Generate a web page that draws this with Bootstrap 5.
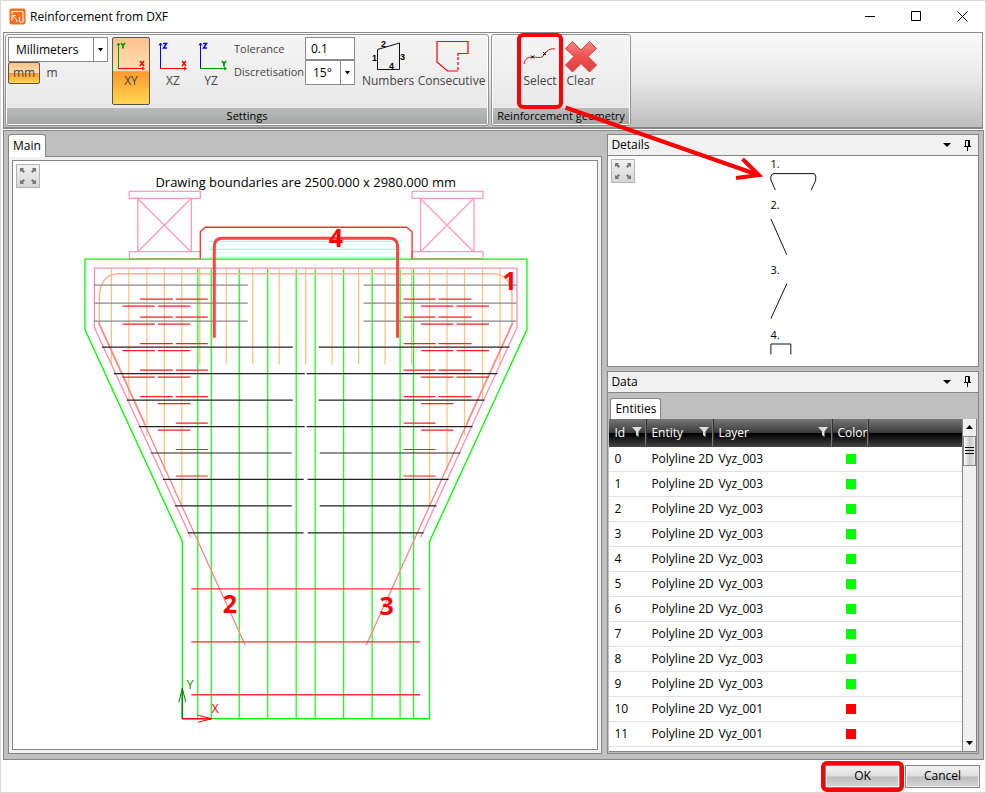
<!DOCTYPE html>
<html lang="en">
<head>
<meta charset="utf-8">
<meta name="viewport" content="width=device-width, initial-scale=1">
<title>Reinforcement from DXF</title>
<link rel="stylesheet" href="https://cdn.jsdelivr.net/npm/bootstrap@5.3.0/dist/css/bootstrap.min.css">
<style>
  body { font-family: "Open Sans", "Noto Sans", sans-serif; font-size: 12px; line-height: 16px; color: #000; background: #fff; }
  .app-window { border: 1px solid #d9d9d9; }
  button, input, select { font: inherit; color: inherit; }
  button { background: none; border: 0; padding: 0; }
  svg { display: block; flex: none; }
  h1, h2 { font-size: 12px; line-height: 16px; font-weight: 400; margin: 0; }
  .title-strip { height: 31px; }
  .win-btn { width: 46px; height: 29px; display: grid; place-items: center; }

  .ribbon { margin: 0 2px; padding: 1px; border: 1px solid #888; border-bottom: 2px solid #888; gap: 2px; background: linear-gradient(#fafafa, #e9e8e9 50%, #bdbdbd); }
  .ribbon-group { border: 1px solid #929292; border-radius: 3px; background: linear-gradient(#f6f6f6, #e6e4e6); box-shadow: inset 0 0 0 1px #fff; padding: 1px; color: #444; }
  .geometry-group { width: 140px; }
  .ribbon-body { height: 72px; padding: 1px; }
  .geometry-group .ribbon-body { padding-left: 28px; gap: 3px; }
  .group-name { height: 16px; background: linear-gradient(#b9bcba, #a4a6a5); color: #000; font-size: 11px; text-align: center; white-space: nowrap; }
  .combo { border: 1px solid #8a8a8a; background: #fff; height: 25px; color: #000; }
  .combo select, .num-box { appearance: none; border: 0; background: #fff; outline: 0; min-width: 0; border-radius: 0; padding: 0 0 0 7px; }
  .combo .drop { width: 14px; border-left: 1px solid #8a8a8a; display: grid; place-items: center; }
  .unit-col { width: 100px; }
  .num-col { width: 50px; }
  .num-box { border: 1px solid #8a8a8a; height: 23px; width: 100%; padding-left: 5px; color: #000; }
  .unit-btn { width: 32px; height: 22px; border: 1px solid transparent; border-radius: 2px; }
  .unit-plain { width: 24px; }
  .tool { border: 1px solid transparent; border-radius: 2px; height: 68px; display: flex; flex-direction: column; align-items: center; padding-top: 2px; }
  .tool svg { height: 33px; }
  .tool-axis { width: 38px; }
  .tool-mid { width: 50px; }
  .tool-wide { width: 69px; }
  .is-on { border-color: #5c5446; background: linear-gradient(#fdc38c, #fedfb3 50%, #ff9a2c 51%, #ffd752); }
  .label-col { width: 71px; font-size: 11px; line-height: 23px; white-space: nowrap; }
  .marked::after { content: ""; position: absolute; inset: -5px; border: 4px solid #f00; border-radius: 6px; pointer-events: none; }
  .callout-arrow { position: absolute; left: 40px; top: 65px; pointer-events: none; z-index: 5; }
  .tool .callout-arrow { height: 86px; }

  .workspace { background: #bfbfbf; border: 1px solid #888; margin: 1px 1px 0 2px; padding: 3px 4px 5px 4px; display: grid; grid-template-columns: minmax(0, 595fr) minmax(0, 372fr); column-gap: 5px; min-height: 0; }
  .tab-btn { background: #fff; border: 1px solid #858585; border-bottom: 0; border-radius: 3px 3px 0 0; }
  .tab-main { height: 23px; padding: 0 4px; margin-bottom: -1px; z-index: 1; }
  .page-frame { border: 1px solid #858585; background: #f1f1f1; padding: 3px; min-height: 0; }
  .canvas-frame { border: 1px solid #858585; background: #fff; min-height: 0; }
  .canvas-frame > svg, .detail-body > svg { width: 100%; height: 100%; }
  .fit-btn { position: absolute; left: 3px; top: 3px; width: 24px; height: 24px; border: 1px solid #b4b4b4; background: linear-gradient(#f2f2f2, #d5d5d5); display: grid; place-items: center; }
  .side { display: grid; grid-template-rows: minmax(0, 233fr) minmax(0, 384fr); row-gap: 4px; min-height: 0; }
  .dock { border: 1px solid #858585; min-height: 0; overflow: hidden; }
  .dock-head { background: #f1f1f1; border-bottom: 1px solid #858585; height: 21px; padding: 0 6px 0 3px; }
  .detail-body { background: #fff; min-height: 0; }
  .tab-entities { height: 21px; padding: 0 4px; margin: 5px 0 0 2px; }
  .grid-area { background: #fff; min-height: 0; border-bottom: 1px solid #858585; margin: 0 1px 1px 1px; }
  .rows { min-height: 0; min-width: 0; overflow: hidden; }
  .entity-grid { width: 100%; table-layout: fixed; border-collapse: separate; border-spacing: 0; }
  .entity-grid th { height: 28px; font-weight: 400; color: #fff; padding: 0 2px 0 5px; background: linear-gradient(#777, #3c3c3c 48%, #000 52%, #454545); border-right: 1px solid #777; white-space: nowrap; }
  .entity-grid th + th { border-left: 1px solid #333; padding-left: 4px; }
  .entity-grid th:last-child { border-right: 0; }
  .entity-grid td { height: 25px; padding: 0 0 0 5px; border-bottom: 1px solid #e2e2e2; white-space: nowrap; }
  .chip { display: block; width: 10px; height: 10px; margin-left: 9px; }
  .chip-green { background: #0f0; }
  .chip-red { background: #f00; }
  .vbar { width: 15px; background: #f0f0f0; border-left: 1px solid #858585; border-right: 1px solid #858585; }
  .vbar button { height: 17px; display: grid; place-items: center; background: #f0f0f0; }
  .thumb { height: 30px; border: 1px solid #858585; background: linear-gradient(90deg, #fff, #c8c8c8 50%, #e8e8e8); display: grid; place-items: center; }

  .footer-strip { height: 32px; padding: 0 5px 0 0; gap: 5px; }
  .dlg-btn { width: 75px; height: 23px; border: 1px solid #858585; background: linear-gradient(#f4f4f4, #dcdcdc 48%, #bdbdbd 52%, #d6d6d6); box-shadow: inset 0 0 0 1px #eee; }
</style>
<script src="https://cdn.jsdelivr.net/npm/bootstrap@5.3.0/dist/js/bootstrap.bundle.min.js"></script>
</head>
<body>
<div class="app-window vh-100 d-flex flex-column">

  <header class="title-strip d-flex align-items-center flex-shrink-0">
    <svg class="ms-2 me-1" width="17" height="17" viewBox="0 0 17 17"><rect x=".5" y=".5" width="16" height="16" rx="2" fill="#f36f21"/><path d="M3 6V3.500H14v10.500h-3.500V9M3 7.500v5M3 7.500h4M4 8l2.500 2.500L8.500 14" fill="none" stroke="#fff" stroke-width="1"/></svg>
    <h1>Reinforcement from DXF</h1>
    <div class="ms-auto d-flex">
      <button class="win-btn" type="button" aria-label="Minimize"><svg width="11" height="11"><path d="M0 5.500h10" stroke="#000"/></svg></button>
      <button class="win-btn" type="button" aria-label="Maximize"><svg width="11" height="11"><path d="M.5.5h9v9h-9z" fill="none" stroke="#000"/></svg></button>
      <button class="win-btn" type="button" aria-label="Close"><svg width="11" height="11"><path d="M.5.5l10 10M10.500.5l-10 10" stroke="#000"/></svg></button>
    </div>
  </header>

  <section class="ribbon d-flex flex-shrink-0">
    <div class="ribbon-group">
      <div class="ribbon-body d-flex">
        <div class="unit-col me-1">
          <div class="combo d-flex">
            <select class="flex-grow-1" aria-label="Units"><option>Millimeters</option></select>
            <span class="drop"><svg width="5" height="4"><path d="M0 0h5L2.500 3.500z"/></svg></span>
          </div>
          <div class="d-flex"><button type="button" class="unit-btn is-on">mm</button><button type="button" class="unit-btn unit-plain">m</button></div>
        </div>
        <button type="button" class="tool tool-axis is-on">
          <svg width="34" viewBox="0 0 34 33" stroke-width="1"><path d="M4.500 29V3M3 5.500L4.500 3 6 5.500" fill="none" stroke="#090"/><path d="M4 28.500h26M28 27l2.500 1.500L28 30" fill="none" stroke="#f00"/><path d="M7 3l2 2.500L11 3M9 5v3.500" fill="none" stroke="#090" stroke-width="1.800"/><path d="M26 21l4 5M30 21l-4 5" stroke="#f00" stroke-width="1.500"/></svg>
          <span>XY</span></button>
        <button type="button" class="tool tool-axis ms-1">
          <svg width="34" viewBox="0 0 34 33"><path d="M4.500 29V3M3 5.500L4.500 3 6 5.500" fill="none" stroke="#00f"/><path d="M4 28.500h26M28 27l2.500 1.500L28 30" fill="none" stroke="#f00"/><path d="M7 3.500h3.500L7.500 8H11" fill="none" stroke="#00f" stroke-width="1.500"/><path d="M26 21l4 5M30 21l-4 5" stroke="#f00" stroke-width="1.500"/></svg>
          <span>XZ</span></button>
        <button type="button" class="tool tool-axis">
          <svg width="34" viewBox="0 0 34 33"><path d="M6.500 29V3M5 5.500L6.500 3 8 5.500" fill="none" stroke="#00f"/><path d="M6 28.500h26M30 27l2.500 1.500L30 30" fill="none" stroke="#090"/><path d="M9 3.500h3.500L9.500 8H13" fill="none" stroke="#00f" stroke-width="1.500"/><path d="M28 21l2 2.500L32 21M30 23v3.500" fill="none" stroke="#090" stroke-width="1.800"/></svg>
          <span>YZ</span></button>
        <div class="label-col ms-1"><label class="d-block" for="tol">Tolerance</label><label class="d-block" for="disc">Discretisation</label></div>
        <div class="num-col">
          <input id="tol" class="num-box d-block" value="0.1">
          <div class="combo d-flex">
            <select id="disc" class="flex-grow-1"><option>15°</option></select>
            <span class="drop"><svg width="5" height="4"><path d="M0 0h5L2.500 3.500z"/></svg></span>
          </div>
        </div>
        <button type="button" class="tool ms-2 tool-mid">
          <svg width="34" viewBox="0 0 34 33"><path d="M6.500 29.500v-20L28.500 3v26.500z" fill="none" stroke="#111"/><g font-family="Liberation Sans" font-weight="700" font-size="9"><text x="10" y="7">2</text><text x="1" y="21">1</text><text x="29" y="20">3</text><text x="18" y="29">4</text></g></svg>
          <span>Numbers</span></button>
        <button type="button" class="tool ms-1 tool-wide">
          <svg width="34" viewBox="0 0 34 33"><path d="M23 31H12.500L2 22V1.500h31v12H23V16" fill="none" stroke="#f00" stroke-width="1.200"/><path d="M23 17v14" stroke="#f00" stroke-width="1.200" stroke-dasharray="3 2"/></svg>
          <span>Consecutive</span></button>
      </div>
      <div class="group-name">Settings</div>
    </div>
    <div class="ribbon-group geometry-group">
      <div class="ribbon-body d-flex">
        <button type="button" class="tool tool-axis position-relative marked">
          <svg width="34" viewBox="0 0 34 33"><path d="M1 24c1-5 4-7 8-7 5 0 9 2 12-2s5-7 11-6" fill="none" stroke="#e00" stroke-width="1"/><path d="M8 15.500l3 3M11 15.500l-3 3M20 12l3 3M23 12l-3 3" stroke="#000"/></svg>
          <span>Select</span>
          <svg class="callout-arrow" width="202" height="86" viewBox="564 102 202 86"><path d="M567.500 106.500L759 173.500" stroke="#f00" stroke-width="4" fill="none"/><path d="M744.500 158L761 174l-23 3" stroke="#f00" stroke-width="4" fill="none"/></svg>
        </button>
        <button type="button" class="tool tool-axis">
          <svg width="34" viewBox="0 0 34 33"><defs><linearGradient id="cx" x2="0" y2="1"><stop stop-color="#f78a8a"/><stop offset=".5" stop-color="#f05050"/><stop offset="1" stop-color="#dd4040"/></linearGradient></defs><path d="M8.500 1.500L17 10l8.500-8.500 7 7L24 16.500l8.500 8.500-7 7L17 23.500 8.500 32l-7-7 8.500-8.500-8.500-8z" fill="url(#cx)" stroke="#d63c3c"/></svg>
          <span>Clear</span></button>
      </div>
      <div class="group-name">Reinforcement geometry</div>
    </div>
  </section>

  <main class="workspace flex-grow-1">
    <section class="d-flex flex-column">
      <div class="d-flex"><button type="button" class="tab-btn tab-main position-relative">Main</button></div>
      <div class="page-frame flex-grow-1 d-flex flex-column">
        <div class="canvas-frame flex-grow-1 position-relative">
          <svg id="drawing" viewBox="12 161 585 587" fill="none" stroke-width="1">
            <g id="verticals"></g>
            <g stroke="#ff9db8" stroke-width="1.300"><path d="M128.500 190.500h71v7h-71zM137 197.500h53.500v53.500H137zM128.500 251h71v7h-71zM411.500 190.500h71v7h-71zM420 197.500h53.500v53.500H420zM411.500 251h71v7h-71z"/><path d="M137 198l53 53M190 198l-53 53M420 198l53 53M473 198l-53 53"/></g>
            <path stroke="#7fffdf" d="M208 240.500h194M208 248.500h194M208 256.500h194"/>
            <path stroke="#0f0" stroke-width="1.300" d="M84 258.500H526.500V329L429 541V718.500H181.500V541L84 329z"/>
            <path stroke="#b5a05f" d="M128 258.500h71M411 258.500h71"/>
            <path stroke="#ff8fae" stroke-width="1.300" d="M190 537L93.500 327V267.500H516.500V327L420 537"/>
            <path stroke="#ffb295" stroke-width="1.400" d="M144 423L98.500 323V293Q101 273 118 273H492Q509 273 511.500 293V323L466 423"/>
            <path stroke="#ff8585" stroke-width="1.300" d="M97.500 322L244.500 645M512.500 322L365.500 645"/>
            <path stroke="#ff2f2f" stroke-width="1.300" d="M199.500 258V231l5-4.500H406l5.500 4.500v27"/>
            <path stroke="#888" stroke-width="1.200" d="M93 284.500H247M93 302.500H247M93 320.500H247M363 284.500H516M363 302.500H516M363 320.500H516"/>
            <g id="horizontals"></g>
            <path stroke="#ff3030" stroke-width="1.300" d="M190.500 588.500h229M190.500 641.500h229M190.500 694.500h229"/>
            <path stroke="#f44" stroke-width="3" d="M213.500 337V246q0-8.500 8-8.500H389q8 0 8 8.500V337"/>
            <path stroke="#080" stroke-width="1.500" d="M181.500 718V688"/><path stroke="#080" d="M178 702l3.500-14 3.500 14"/>
            <path stroke="#f00" stroke-width="1.500" d="M181 718.500h30"/><path stroke="#f00" d="M197 715l14 3.500-14 3.500"/>
            <g stroke="none" font-size="12"><text x="186" y="689" fill="#080">Y</text><text x="211" y="713" fill="#f00">X</text></g>
            <g stroke="none" fill="#f00" font-weight="700" font-size="25"><text x="502" y="289">1</text><text x="222" y="613">2</text><text x="379" y="615">3</text><text x="328" y="246">4</text></g>
            <text x="305" y="186" text-anchor="middle" stroke="none" fill="#000" font-size="13">Drawing boundaries are 2500.000 x 2980.000 mm</text>
          </svg>
          <button type="button" class="fit-btn" aria-label="Fit drawing"><svg width="18" height="18" viewBox="0 0 18 18"><path id="fit" fill="#777" d="M1 1h4L4 2.500 6 4.500 4.500 6l-2-2L1 5zM17 1v4l-1.500-1-2 2L12 4.500l2-2L13 1zM1 17v-4l1.500 1 2-2L6 13.500l-2 2L5 17zM17 17h-4l1-1.500-2-2 1.500-1.500 2 2L17 13z"/></svg></button>
        </div>
      </div>
    </section>

    <aside class="side">
      <section class="dock d-flex flex-column">
        <div class="dock-head d-flex align-items-center flex-shrink-0"><h2>Details</h2>
          <button type="button" class="ms-auto me-2" aria-label="Details menu"><svg width="8" height="4"><path d="M0 0h8L4 4z"/></svg></button>
          <button type="button" class="ms-1" aria-label="Pin details"><svg width="9" height="11"><path d="M2.500 6V.5h4V6M1 6.500h7M4.500 7v4M5.500 1v5" fill="none" stroke="#000"/></svg></button>
        </div>
        <div class="detail-body flex-grow-1 position-relative">
          <svg viewBox="607 156 371 210" fill="none" stroke="#111"><path d="M775 190l-4.500-10v-4l2-2.500H814l1.500 2.500v4L811 190M770.500 219l16 36M786.500 284l-16 35M770.500 355V344.500h20V355"/><g fill="#000" stroke="none" font-size="11"><text x="770" y="168">1.</text><text x="770" y="209">2.</text><text x="770" y="274">3.</text><text x="770" y="339">4.</text></g></svg>
          <button type="button" class="fit-btn" aria-label="Fit details"><svg width="18" height="18" viewBox="0 0 18 18"><use href="#fit"/></svg></button>
        </div>
      </section>

      <section class="dock d-flex flex-column">
        <div class="dock-head d-flex align-items-center flex-shrink-0"><h2>Data</h2>
          <button type="button" class="ms-auto me-2" aria-label="Data menu"><svg width="8" height="4"><path d="M0 0h8L4 4z"/></svg></button>
          <button type="button" class="ms-1" aria-label="Pin data"><svg width="9" height="11"><path d="M2.500 6V.5h4V6M1 6.500h7M4.500 7v4M5.500 1v5" fill="none" stroke="#000"/></svg></button>
        </div>
        <div class="d-flex flex-shrink-0"><button type="button" class="tab-btn tab-entities">Entities</button></div>
        <div class="grid-area flex-grow-1 d-flex">
          <div class="rows flex-grow-1">
            <table class="entity-grid">
              <colgroup><col style="width:37px"><col style="width:67px"><col style="width:119px"><col style="width:36px"><col></colgroup>
              <thead><tr>
                <th scope="col"><span class="d-flex justify-content-between align-items-center">Id <svg width="11" height="11"><path id="fn" d="M0 0h10L6.500 4.500V10L4 8V4.500z" fill="#ddd"/></svg></span></th>
                <th scope="col"><span class="d-flex justify-content-between align-items-center">Entity <svg width="11" height="11"><use href="#fn"/></svg></span></th>
                <th scope="col"><span class="d-flex justify-content-between align-items-center">Layer <svg width="11" height="11"><use href="#fn"/></svg></span></th>
                <th scope="col">Color</th><th></th>
              </tr></thead>
              <tbody id="entities"></tbody>
            </table>
          </div>
          <div class="vbar d-flex flex-column flex-shrink-0">
            <button type="button" aria-label="Scroll up"><svg width="7" height="4"><path d="M0 4h7L3.500 0z"/></svg></button>
            <div class="thumb"><svg width="9" height="8"><path d="M0 .5h9M0 3.500h9M0 6.500h9" stroke="#000"/></svg></div>
            <button type="button" class="mt-auto" aria-label="Scroll down"><svg width="7" height="4"><path d="M0 0h7L3.500 4z"/></svg></button>
          </div>
        </div>
      </section>
    </aside>
  </main>

  <footer class="footer-strip d-flex justify-content-end align-items-center flex-shrink-0">
    <button type="button" class="dlg-btn position-relative marked">OK</button>
    <button type="button" class="dlg-btn">Cancel</button>
  </footer>
</div>
<script>
  // Both halves of the section are symmetrical about x = 305
  const mirror = x => 610 - x;
  const seg = (x1, y1, x2, y2) => `M${x1} ${y1}L${x2} ${y2}`;
  const both = (x1, y1, x2, y2) => seg(x1, y1, x2, y2) + seg(mirror(x1), y1, mirror(x2), y2);

  const green = [197, 210.5, 238.5, 267, 295.5].map(x => both(x, 268, x, 718)).join('');
  const orange = [[110.5, 364], [128, 400], [146, 435], [163.5, 470], [181, 506], [199, 364], [225.5, 364], [252, 364], [278.5, 364]]
    .map(([x, y]) => both(x, 268, x, y)).join('') + seg(305, 268, 305, 364);
  document.getElementById('verticals').innerHTML =
    `<path stroke="#1f1" stroke-width="1.200" d="${green}"/><path stroke="#ffc080" stroke-width="1.200" d="${orange}"/>`;

  const black = [[346.5, 101, 292], [373, 113, 304], [399.5, 126, 292], [426, 138, 304], [452.5, 150, 291], [479, 162, 303], [505.5, 174, 291], [532.5, 187, 303]]
    .map(([y, a, b]) => both(a, y, b, y)).join('');
  const A = [139, 172], B = [175, 207], C = [121.5, 154], D = [157, 189.5];
  const red = [[298.5, A, B], [305.5, C, D], [316.5, A, B], [323.5, C, D], [343, A, B], [350, C, D], [369.5, A, B], [376.5, C, D],
    [396, A, B], [403, D], [422.5, B], [429.5, D], [449, B], [475.5, B]]
    .map(([y, ...s]) => s.map(([a, b]) => both(a, y, b, y)).join('')).join('');
  document.getElementById('horizontals').innerHTML =
    `<path stroke="#222" stroke-width="1.200" d="${black}"/><path stroke="#ff2020" stroke-width="1.200" d="${red}"/>`;

  document.getElementById('entities').innerHTML = Array.from({ length: 13 }, (_, i) => i < 12
    ? `<tr><td>${i}</td><td>Polyline 2D</td><td>Vyz_00${i < 10 ? 3 : 1}</td><td><span class="chip chip-${i < 10 ? 'green' : 'red'}"></span></td><td></td></tr>`
    : '<tr><td></td><td></td><td></td><td></td><td></td></tr>').join('');
</script>
</body>
</html>
